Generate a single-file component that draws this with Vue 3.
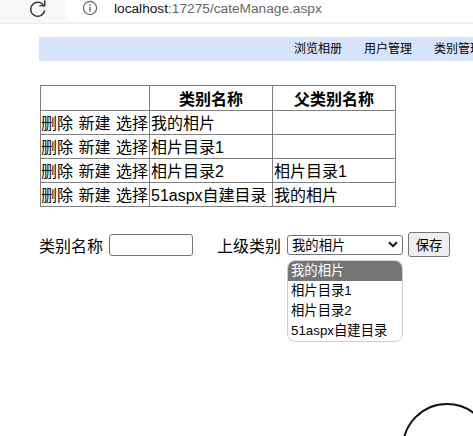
<script setup>
const rows = [
  { name: '我的相片', parent: '' },
  { name: '相片目录1', parent: '' },
  { name: '相片目录2', parent: '相片目录1' },
  { name: '51aspx自建目录', parent: '我的相片' }
]
const navItems = ['浏览相册', '用户管理', '类别管理']
const options = ['我的相片', '相片目录1', '相片目录2', '51aspx自建目录']
</script>

<template>
  <div class="page">
    <div class="chrome">
      <svg class="reload" width="20" height="20" viewBox="0 0 20 20">
        <path d="M16.2 8.6A7 7 0 1 0 16.6 12.5" fill="none" stroke="#333" stroke-width="1.4" />
        <path d="M16.8 2.2V7.6H11.4" fill="none" stroke="#333" stroke-width="1.4" />
      </svg>
      <div class="address">
        <svg class="info" width="16" height="16" viewBox="0 0 16 16">
          <circle cx="8" cy="8" r="6.6" fill="none" stroke="#666" stroke-width="1.2" />
          <rect x="7.3" y="7" width="1.4" height="4.6" fill="#666" />
          <rect x="7.3" y="4.4" width="1.4" height="1.5" fill="#666" />
        </svg>
        <span class="url"><span class="host">localhost</span>:17275/cateManage.aspx</span>
      </div>
    </div>

    <nav class="nav">
      <span v-for="item in navItems" :key="item" class="nav-item">{{ item }}</span>
    </nav>

    <table class="grid">
      <colgroup>
        <col class="col-actions" />
        <col class="col-name" />
        <col class="col-parent" />
      </colgroup>
      <thead>
        <tr>
          <th></th>
          <th>类别名称</th>
          <th>父类别名称</th>
        </tr>
      </thead>
      <tbody>
        <tr v-for="row in rows" :key="row.name">
          <td class="actions">删除 新建 选择</td>
          <td>{{ row.name }}</td>
          <td>{{ row.parent }}</td>
        </tr>
      </tbody>
    </table>

    <form class="form" @submit.prevent>
      <label class="label">类别名称</label>
      <input class="text-input" type="text" />
      <label class="label parent-label">上级类别</label>
      <div class="select-wrap">
        <div class="select">
          <span>我的相片</span>
          <svg width="10" height="7" viewBox="0 0 10 7">
            <path d="M1 1.2L5 5.2L9 1.2" fill="none" stroke="#111" stroke-width="2" />
          </svg>
        </div>
        <ul class="dropdown">
          <li v-for="(opt, i) in options" :key="opt" :class="{ active: i === 0 }">{{ opt }}</li>
        </ul>
      </div>
      <button class="save" type="button">保存</button>
    </form>

    <div class="circle"></div>
  </div>
</template>

<style>
html,
body {
  margin: 0;
  background: #fff;
  overflow: hidden;
}
</style>

<style scoped>
.page {
  position: relative;
  width: 473px;
  height: 436px;
  overflow: hidden;
  font-family: "Liberation Sans", "Noto Sans CJK SC", sans-serif;
  color: #000;
}

.chrome {
  display: flex;
  align-items: flex-start;
  height: 23px;
  padding-left: 28px;
  background: #f7f7f7;
  border-bottom: 1px solid #ececec;
}

.reload {
  margin-top: -2px;
}

.address {
  display: flex;
  align-items: flex-start;
  flex: 1;
  height: 22px;
  margin-left: 17px;
  padding-left: 17px;
  background: #fff;
  border-bottom-left-radius: 14px;
}

.url {
  margin-left: 16px;
  font-size: 13.7px;
  line-height: 17px;
  color: #666;
  white-space: nowrap;
}

.host {
  color: #111;
}

.nav {
  display: flex;
  gap: 22px;
  height: 24px;
  margin: 13px 0 0 39px;
  padding-left: 255px;
  background: #d6e4fb;
  font-size: 12px;
  line-height: 25px;
  white-space: nowrap;
  overflow: hidden;
}

.grid {
  width: 355px;
  margin: 24px 0 0 40px;
  border-collapse: collapse;
  table-layout: fixed;
  font-size: 16px;
}

.col-actions {
  width: 109px;
}

.col-name {
  width: 123px;
}

.col-parent {
  width: 123px;
}

.grid th,
.grid td {
  height: 24px;
  padding: 2px 1px 0;
  border: 1px solid #808080;
  line-height: 21px;
  white-space: nowrap;
  overflow: hidden;
  box-sizing: border-box;
}

.grid th {
  height: 25px;
  font-weight: 700;
  text-align: center;
}

.grid td {
  text-align: left;
}

.grid td.actions {
  padding-left: 0;
  word-spacing: 1px;
}

.form {
  display: flex;
  align-items: center;
  height: 25px;
  margin: 25px 0 0 39px;
  font-size: 16px;
}

.label {
  white-space: nowrap;
}

.text-input {
  width: 84px;
  height: 22px;
  margin-left: 6px;
  padding: 0 2px;
  border: 1px solid #767676;
  border-radius: 3px;
  box-sizing: border-box;
  background: #fff;
}

.parent-label {
  margin-left: 24px;
}

.select-wrap {
  position: relative;
  margin-left: 6px;
}

.select {
  display: flex;
  align-items: center;
  justify-content: space-between;
  width: 116px;
  height: 20px;
  padding: 0 4px;
  border: 1px solid #767676;
  border-radius: 3px;
  box-sizing: border-box;
  font-size: 13.33px;
}

.dropdown {
  position: absolute;
  top: 25px;
  left: 0;
  width: 116px;
  margin: 0;
  padding: 0;
  list-style: none;
  border: 1px solid #d0d0d0;
  border-radius: 8px;
  box-sizing: border-box;
  background: #fff;
  overflow: hidden;
  font-size: 13.33px;
}

.dropdown li {
  height: 20px;
  padding-left: 3px;
  line-height: 20px;
  white-space: nowrap;
}

.dropdown li.active {
  background: #757575;
  color: #fff;
}

.save {
  width: 42px;
  height: 25px;
  margin-left: 5px;
  padding: 0;
  border: 1px solid #767676;
  border-radius: 3px;
  background: #efefef;
  font-family: inherit;
  font-size: 13.33px;
  color: #000;
}

.circle {
  position: absolute;
  left: 402px;
  top: 403px;
  width: 90px;
  height: 90px;
  border: 2px solid #111;
  border-radius: 50%;
  box-sizing: border-box;
}
</style>
